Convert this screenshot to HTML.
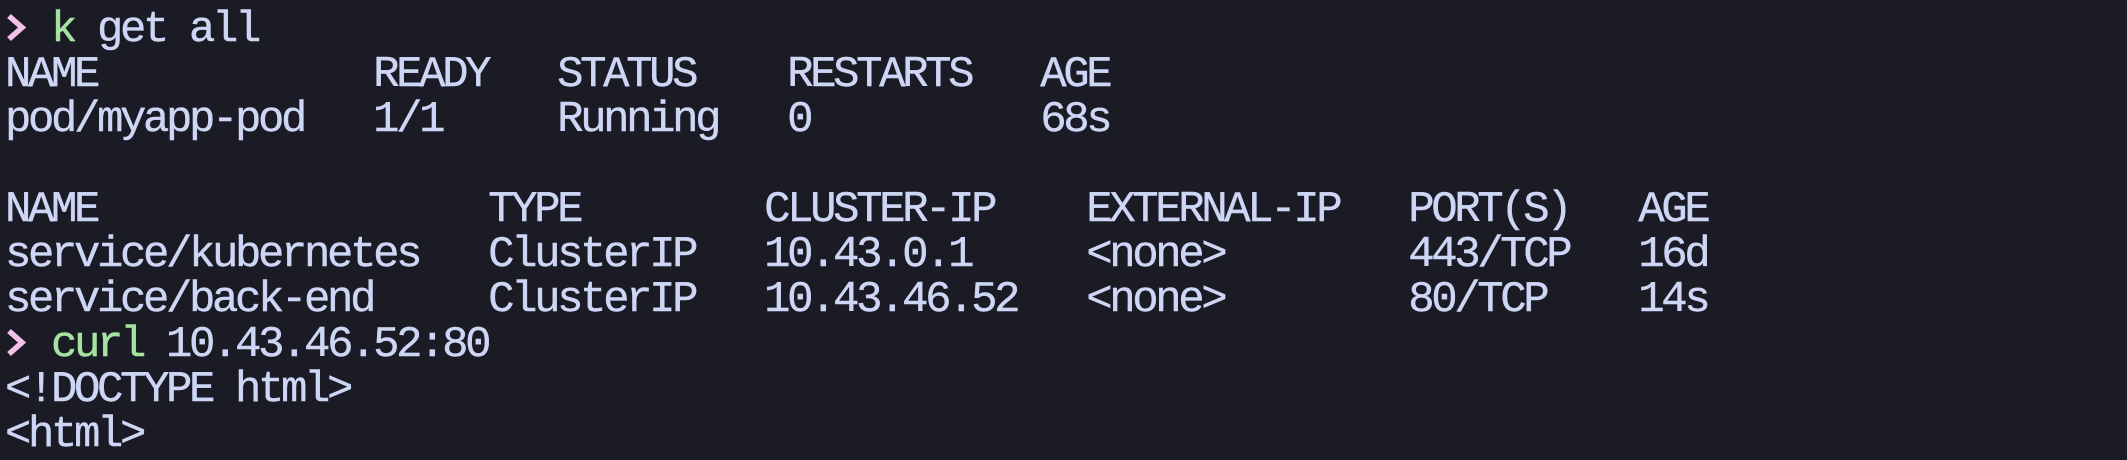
<!DOCTYPE html>
<html><head><meta charset="utf-8"><style>
html,body{margin:0;padding:0;background:#1b1b26;width:2127px;height:435px;overflow:hidden}
pre{margin:0;position:absolute;left:5px;top:8px;font-family:"Liberation Mono",monospace;font-size:44px;letter-spacing:-3.4px;line-height:45px;color:#cdd6f4;-webkit-text-stroke:0.4px #cdd6f4}
.g{color:#a6e3a1;-webkit-text-stroke:0.4px #a6e3a1}
.c{display:inline-block;width:23px;height:1px}
svg{position:absolute;left:0;top:0}
</style></head><body>
<svg width="60" height="440"><polyline points="9,16 22,27.5 9,39" fill="none" stroke="#f5c2e7" stroke-width="5.5"/><polyline points="9,331 22,342.5 9,354" fill="none" stroke="#f5c2e7" stroke-width="5.5"/></svg>
<pre><span class="c"></span> <span class="g">k</span> get all
NAME            READY   STATUS    RESTARTS   AGE
pod/myapp-pod   1/1     Running   0          68s

NAME                 TYPE        CLUSTER-IP    EXTERNAL-IP   PORT(S)   AGE
service/kubernetes   ClusterIP   10.43.0.1     &lt;none&gt;        443/TCP   16d
service/back-end     ClusterIP   10.43.46.52   &lt;none&gt;        80/TCP    14s
<span class="c"></span> <span class="g">curl</span> 10.43.46.52:80
&lt;!DOCTYPE html&gt;
&lt;html&gt;</pre></body></html>
